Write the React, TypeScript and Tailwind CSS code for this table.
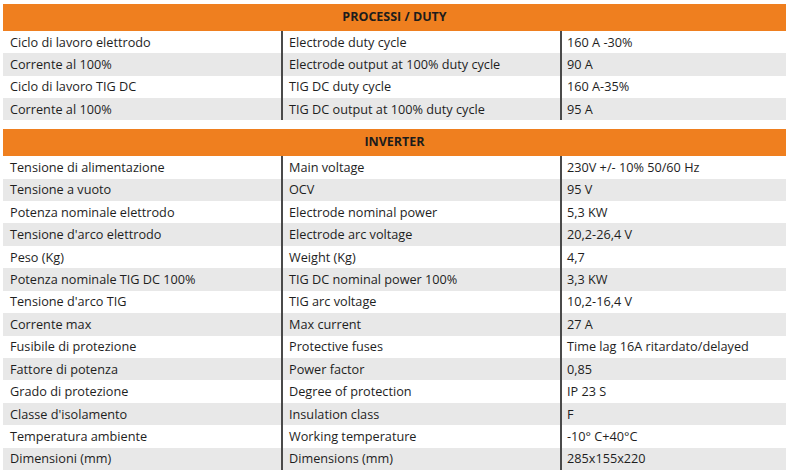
import React from 'react';

type Row = [string, string, string];

const duty: Row[] = [
  ['Ciclo di lavoro elettrodo', 'Electrode duty cycle', '160 A -30%'],
  ['Corrente al 100%', 'Electrode output at 100% duty cycle', '90 A'],
  ['Ciclo di lavoro TIG DC', 'TIG DC duty cycle', '160 A-35%'],
  ['Corrente al 100%', 'TIG DC output at 100% duty cycle', '95 A'],
];

const inverter: Row[] = [
  ['Tensione di alimentazione', 'Main voltage', '230V +/- 10% 50/60 Hz'],
  ['Tensione a vuoto', 'OCV', '95 V'],
  ['Potenza nominale elettrodo', 'Electrode nominal power', '5,3 KW'],
  ["Tensione d'arco elettrodo", 'Electrode arc voltage', '20,2-26,4 V'],
  ['Peso (Kg)', 'Weight (Kg)', '4,7'],
  ['Potenza nominale TIG DC 100%', 'TIG DC nominal power 100%', '3,3 KW'],
  ["Tensione d'arco TIG", 'TIG arc voltage', '10,2-16,4 V'],
  ['Corrente max', 'Max current', '27 A'],
  ['Fusibile di protezione', 'Protective fuses', 'Time lag 16A ritardato/delayed'],
  ['Fattore di potenza', 'Power factor', '0,85'],
  ['Grado di protezione', 'Degree of protection', 'IP 23 S'],
  ["Classe d'isolamento", 'Insulation class', 'F'],
  ['Temperatura ambiente', 'Working temperature', '-10° C+40°C'],
  ['Dimensioni (mm)', 'Dimensions (mm)', '285x155x220'],
];

const Section: React.FC<{ title: string; rows: Row[]; rowH: string }> = ({ title, rows, rowH }) => (
  <div>
    <div className="h-[27px] bg-[#ef7f1f] flex items-center justify-center text-[12.5px] font-bold text-[#1c1c1c]">
      {title}
    </div>
    {rows.map((r, i) => (
      <div
        key={i}
        className={`grid grid-cols-[278px_279px_1fr] ${rowH} text-[12.7px] text-[#1e1e1e] ${
          i % 2 === 1 ? 'bg-[#e8e8e8]' : 'bg-white'
        }`}
      >
        <div className="pl-[7px] flex items-center">{r[0]}</div>
        <div className="pl-[6px] flex items-center border-l-2 border-[#4a4a4a]">{r[1]}</div>
        <div className="pl-[5px] flex items-center border-l-2 border-[#4a4a4a]">{r[2]}</div>
      </div>
    ))}
  </div>
);

const App: React.FC = () => {
  return (
    <div
      className="w-[788px] h-[472px] bg-white pt-[4px] pl-[3px] pr-[2px] overflow-hidden"
      style={{ fontFamily: '"Open Sans", "Liberation Sans", sans-serif' }}
    >
      <Section title="PROCESSI / DUTY" rows={duty} rowH="h-[22.3px]" />
      <div className="h-[9px]" />
      <Section title="INVERTER" rows={inverter} rowH="h-[22.43px]" />
    </div>
  );
};

export default App;
